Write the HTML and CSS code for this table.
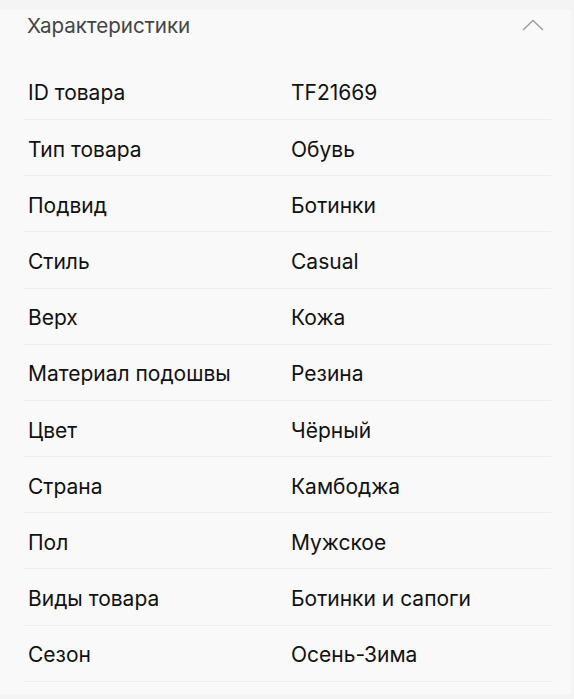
FILE: index.html
```html
<!DOCTYPE html>
<html lang="ru">
<head>
<meta charset="utf-8">
<link rel="stylesheet" href="styles.css">
</head>
<body>
<section class="card">
  <header class="card-head">
    <h2 class="title">Характеристики</h2>
    <svg class="chevron" width="22" height="12" viewBox="0 0 22 12"><path d="M1 11 L11 1.5 L21 11" fill="none" stroke="#9a9a9a" stroke-width="1.3"/></svg>
  </header>
  <dl class="specs">
    <div class="row"><dt>ID товара</dt><dd>TF21669</dd></div>
    <div class="row"><dt>Тип товара</dt><dd>Обувь</dd></div>
    <div class="row"><dt>Подвид</dt><dd>Ботинки</dd></div>
    <div class="row"><dt>Стиль</dt><dd>Casual</dd></div>
    <div class="row"><dt>Верх</dt><dd>Кожа</dd></div>
    <div class="row"><dt>Материал подошвы</dt><dd>Резина</dd></div>
    <div class="row"><dt>Цвет</dt><dd>Чёрный</dd></div>
    <div class="row"><dt>Страна</dt><dd>Камбоджа</dd></div>
    <div class="row"><dt>Пол</dt><dd>Мужское</dd></div>
    <div class="row"><dt>Виды товара</dt><dd>Ботинки и сапоги</dd></div>
    <div class="row"><dt>Сезон</dt><dd>Осень-Зима</dd></div>
  </dl>
</section>
</body>
</html>
```
FILE: styles.css
```css
html, body {
  margin: 0;
  padding: 0;
  background: #f4f4f4;
}
body {
  font-family: Inter, "Noto Sans", sans-serif;
  color: #111;
}
.card {
  margin-top: 10px;
  width: 571px;
  height: 684px;
  background: #f9f9f9;
  box-sizing: border-box;
  padding: 0 20px 0 23px;
}
.card-head {
  height: 53.8px;
  display: flex;
  align-items: flex-start;
  justify-content: space-between;
  padding: 6px 7px 0 4px;
  box-sizing: border-box;
}
.title {
  margin: 0;
  font-size: 20.6px;
  font-weight: 400;
  color: #454545;
  line-height: 1;
}
.chevron {
  display: block;
  margin-top: 3px;
}
.specs {
  margin: 0;
}
.row {
  display: grid;
  grid-template-columns: 263px 1fr;
  align-items: center;
  height: 56.2px;
  box-sizing: border-box;
  border-bottom: 1px solid #eeeeee;
  padding: 3px 0 0 5px;
}
.row dt, .row dd {
  margin: 0;
  font-size: 21px;
  line-height: 1;
  color: #111;
}
```
